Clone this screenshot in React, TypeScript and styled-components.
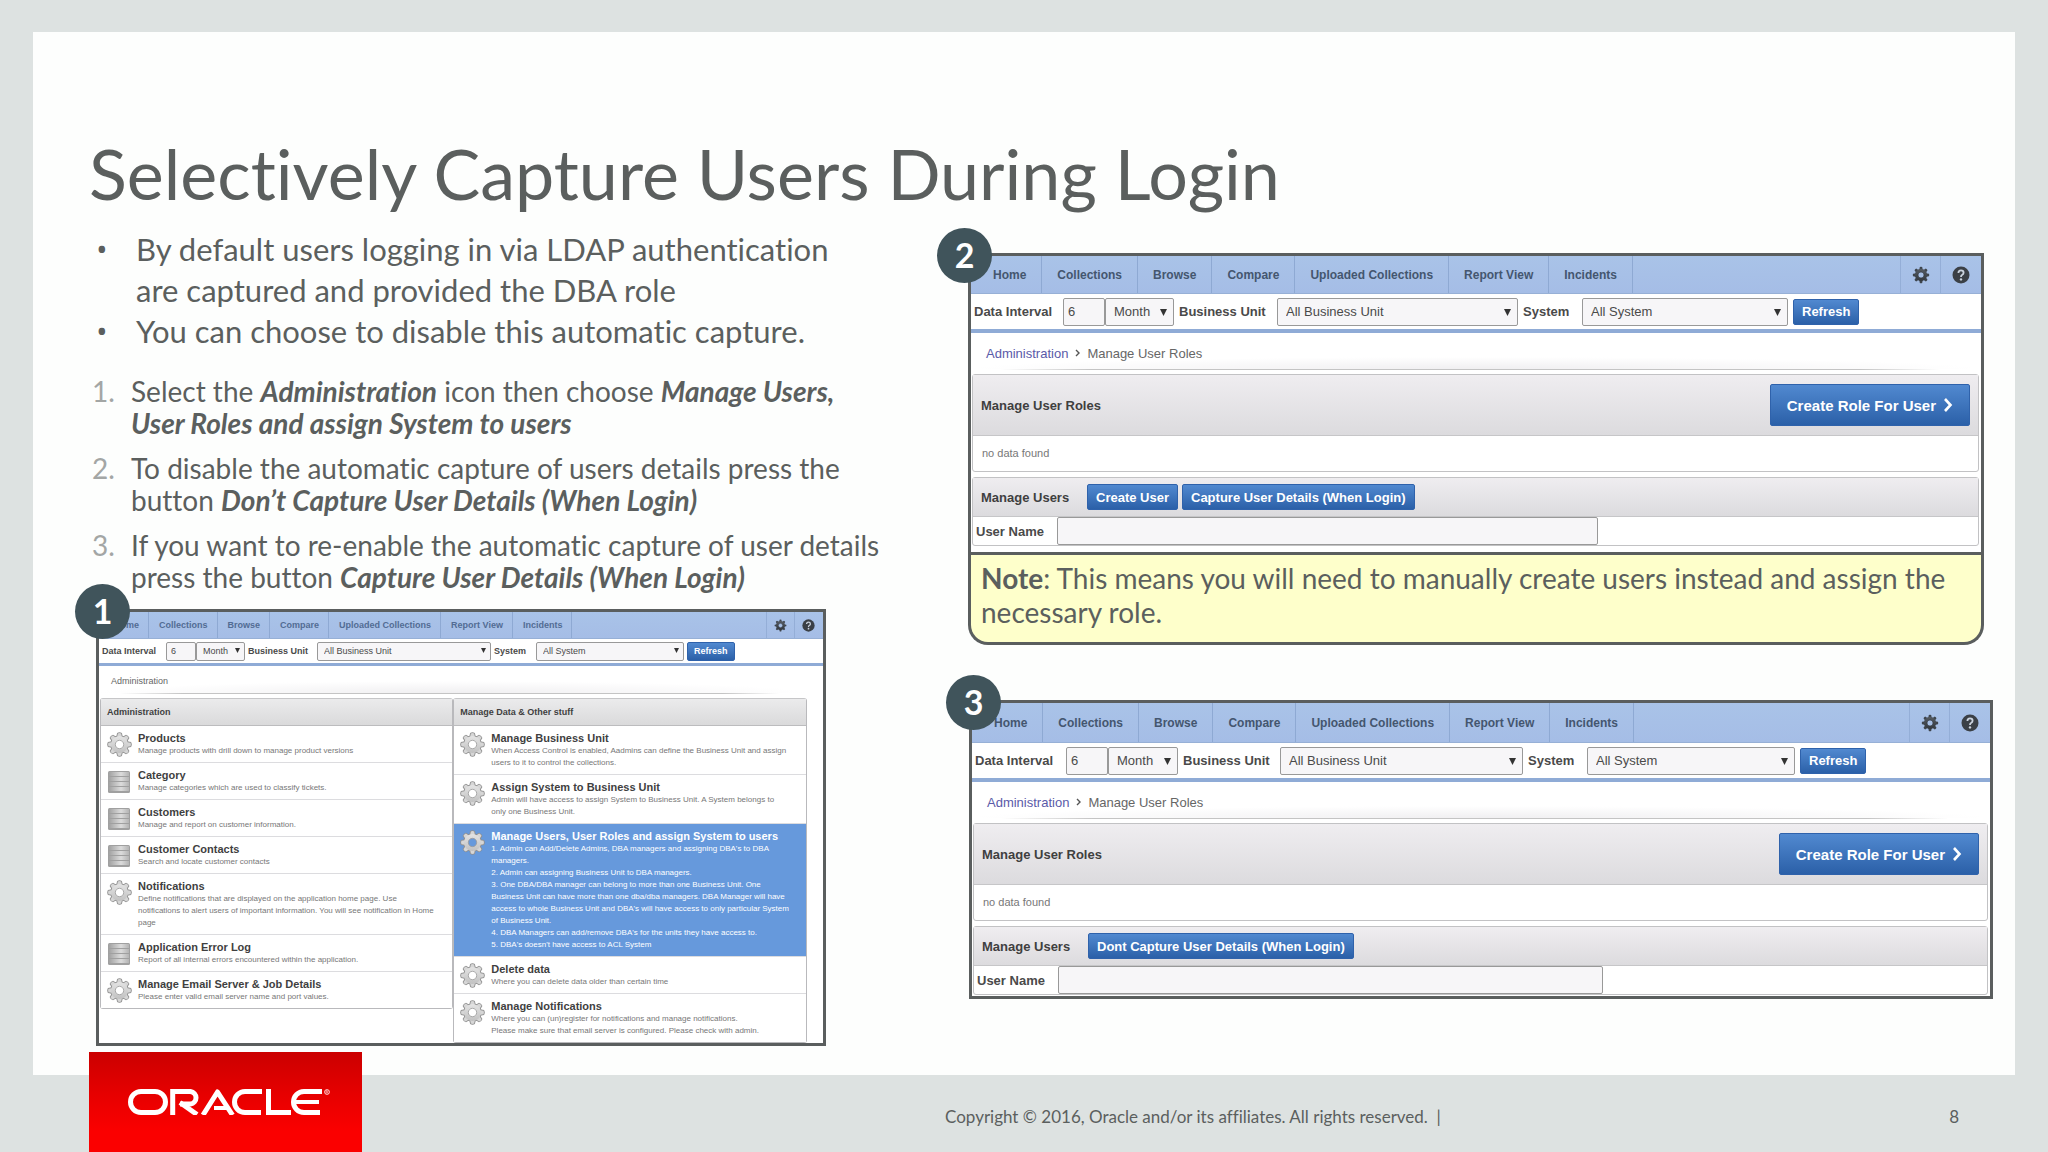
import React from "react";
import styled, { createGlobalStyle, css } from "styled-components";

const slideFont = `Lato, "Open Sans", sans-serif`;
const appFont = `"Liberation Sans", Arial, sans-serif`;

const ink = "#5b5f5e";
const frame = "#5a5e5e";

const Global = createGlobalStyle`
  *, *::before { box-sizing: border-box; }
  body { margin: 0; background: #dde2e1; }
`;

/* ---------- Slide ---------- */

const Page = styled.div`
  min-height: 100vh;
  display: flex;
  flex-direction: column;
  background: #dde2e1;
  color: ${ink};
  font-family: ${slideFont};
  font-variant-ligatures: none;
`;

const Slide = styled.main`
  flex: 1;
  margin: 32px 33px 0;
  padding: 99px 22px 28px 56px;
  background: #fdfefd;
`;

const Title = styled.h1`
  margin: 0 0 14px;
  font-size: 70px;
  line-height: 84px;
  font-weight: 400;
`;

const Columns = styled.div`
  display: grid;
  grid-template-columns: minmax(0, 879fr) minmax(0, 1025fr);
`;

const Column = styled.section`
  min-width: 0;
`;

const Bullets = styled.ul`
  margin: 0 0 23px;
  padding: 0;
  list-style: none;
  font-size: 31px;
  line-height: 41px;
`;

const Bullet = styled.li`
  display: flex;
  &::before {
    content: "•";
    flex: 0 0 47px;
    padding-left: 7px;
    font-family: "Open Sans", sans-serif;
  }
`;

const Steps = styled.ol`
  margin: 0 0 16px;
  padding: 0;
  display: flex;
  flex-direction: column;
  gap: 13px;
  list-style: none;
  counter-reset: step;
  font-size: 28px;
  line-height: 32px;
`;

const Step = styled.li`
  display: flex;
  counter-increment: step;
  &::before {
    content: counter(step) ".";
    flex: 0 0 42px;
    padding-left: 3px;
    color: #a3a6a5;
  }
  em { font-weight: 700; }
`;

const Footer = styled.footer`
  display: grid;
  grid-template-columns: minmax(0, 856fr) minmax(0, 1014fr);
  grid-template-rows: 77px;
  padding: 0 89px;
  align-items: end;
`;

const LogoBox = styled.div`
  width: 273px;
  height: 100px;
  padding-left: 6px;
  display: flex;
  align-items: center;
  justify-content: center;
  background: linear-gradient(#cb0000, #e80000 45%, #fb0000 80%);
`;

const FooterLine = styled.div`
  display: flex;
  justify-content: space-between;
  padding-bottom: 24px;
  font-size: 17px;
  line-height: 22px;
  white-space: pre;
`;

/* ---------- Framed application windows ---------- */

const Stack = styled.div<{ $width?: string; $top?: number; $right?: number; $left?: number }>`
  position: relative;
  width: ${(p) => p.$width ?? "auto"};
  margin: ${(p) => p.$top ?? 0}px ${(p) => p.$right ?? 0}px 0 ${(p) => p.$left ?? 0}px;
`;

const Badge = styled.span<{ $x: number }>`
  position: absolute;
  z-index: 1;
  top: -25px;
  left: ${(p) => p.$x}px;
  width: 55px;
  height: 55px;
  border-radius: 50%;
  background: #40545b;
  color: #fff;
  font-size: 34px;
  line-height: 54px;
  font-weight: 700;
  text-align: center;
`;

const Note = styled.p`
  margin: 0;
  padding: 6px 10px 13px;
  border: 3px solid ${frame};
  border-top: 0;
  border-radius: 0 0 20px 20px;
  background: #feffcb;
  font-size: 28px;
  line-height: 34px;
`;

const Window = styled.div<{ $compact?: boolean; $bottom?: number }>`
  border: 3px solid ${frame};
  padding-bottom: ${(p) => p.$bottom ?? 0}px;
  background: #fff;
  color: #444;
  font-family: ${appFont};
  font-size: ${(p) => (p.$compact ? 9 : 13)}px;
`;

const Nav = styled.nav<{ $compact?: boolean; $height: number }>`
  display: flex;
  height: ${(p) => p.$height}px;
  padding-left: ${(p) => (p.$compact ? 5 : 7)}px;
  border-bottom: 1px solid #97b0d6;
  background: linear-gradient(#a9c3e8, #a5bde6);
  font-size: ${(p) => (p.$compact ? 9 : 12)}px;
`;

const NavLink = styled.a<{ $compact?: boolean }>`
  display: flex;
  align-items: center;
  padding: ${(p) => (p.$compact ? "0 9px 0 10px" : "0 15px")};
  border-right: 1px solid #8ea9d3;
  color: ${(p) => (p.$compact ? "#526c94" : "#44566f")};
  font-weight: 700;
  text-decoration: none;
  white-space: nowrap;
`;

const NavIcons = styled.div`
  display: flex;
  margin-left: auto;
  padding-right: 1px;
`;

const IconButton = styled.button<{ $compact?: boolean }>`
  display: grid;
  place-items: center;
  width: ${(p) => (p.$compact ? 28 : 40)}px;
  padding: 0;
  border: 0;
  border-left: 1px solid #94aed7;
  background: none;
  svg {
    width: ${(p) => (p.$compact ? 13 : 18)}px;
    height: ${(p) => (p.$compact ? 13 : 18)}px;
  }
`;

const Toolbar = styled.form<{ $compact?: boolean }>`
  display: flex;
  align-items: center;
  height: ${(p) => (p.$compact ? 27 : 39)}px;
  padding-left: 3px;
  border-bottom: ${(p) => (p.$compact ? 3 : 4)}px solid #8fabd6;
`;

const FieldLabel = styled.label<{ $width: number }>`
  flex: 0 0 ${(p) => p.$width}px;
  color: #4a4a4a;
  font-weight: 700;
  white-space: nowrap;
`;

const control = css<{ $compact?: boolean }>`
  height: ${(p) => (p.$compact ? 19 : 28)}px;
  border: 1px solid #999;
  border-radius: 2px;
  background: #f7f6f8;
  color: #4a4a4a;
  font-family: inherit;
  font-size: inherit;
`;

const NumberBox = styled.input<{ $compact?: boolean }>`
  ${control}
  width: ${(p) => (p.$compact ? 30 : 42)}px;
  padding: 0 4px;
`;

const SelectBox = styled.span<{ $width: number; $gap: number }>`
  position: relative;
  flex: 0 0 ${(p) => p.$width}px;
  margin-right: ${(p) => p.$gap}px;
`;

const Select = styled.select<{ $compact?: boolean }>`
  ${control}
  display: block;
  width: 100%;
  padding: 0 ${(p) => (p.$compact ? 6 : 8)}px;
  appearance: none;
`;

const Arrow = styled.svg<{ $compact?: boolean }>`
  position: absolute;
  top: 50%;
  right: ${(p) => (p.$compact ? 5 : 7)}px;
  width: ${(p) => (p.$compact ? 5 : 7)}px;
  height: ${(p) => (p.$compact ? 5 : 7)}px;
  margin-top: -3px;
  fill: #333;
  pointer-events: none;
`;

const BlueButton = styled.button<{ $compact?: boolean; $large?: boolean }>`
  display: inline-flex;
  align-items: center;
  justify-content: center;
  gap: 7px;
  height: ${(p) => (p.$large ? 42 : p.$compact ? 19 : 26)}px;
  padding: 0 ${(p) => (p.$large ? 16 : p.$compact ? 6 : 8)}px;
  border: 1px solid #2f62ab;
  border-radius: 2px;
  background: linear-gradient(#5189d0, #2b60a8);
  color: #fff;
  font-family: inherit;
  font-size: ${(p) => (p.$large ? 15 : p.$compact ? 9 : 13)}px;
  font-weight: 700;
  white-space: nowrap;
`;

const Crumbs = styled.div<{ $compact?: boolean }>`
  display: flex;
  align-items: center;
  gap: 7px;
  height: ${(p) => (p.$compact ? 28 : 37)}px;
  margin: 0 ${(p) => (p.$compact ? 16 : 2)}px 4px 0;
  padding: ${(p) => (p.$compact ? "2px 0 0 12px" : "4px 0 0 15px")};
  color: #666;
  border-bottom: 1px solid;
  border-image: linear-gradient(90deg, transparent 3%, #c4c4c4 12%, #c4c4c4 88%, transparent 96%) 1;
  background: radial-gradient(ellipse 50% 12px at 50% 100%, #f0eff1, #fff);
  a { color: #5a5aa8; text-decoration: none; }
`;

const Region = styled.section`
  margin: 0 2px 5px 1px;
  border: 1px solid #c2c2c4;
  border-radius: 3px;
  &:last-child { margin-bottom: 1px; }
`;

const RegionHead = styled.header<{ $height: number }>`
  display: flex;
  align-items: center;
  gap: 4px;
  height: ${(p) => p.$height}px;
  padding: 0 8px;
  border-bottom: 1px solid #c6c6c8;
  background: linear-gradient(#efedf0, #dcdbde);
`;

const RegionTitle = styled.h2<{ $wide?: boolean }>`
  flex: ${(p) => (p.$wide ? "1" : "0 0 102px")};
  margin: 0;
  color: #3f3f3f;
  font-size: 13px;
  font-weight: 700;
`;

const Empty = styled.p`
  margin: 0;
  padding: 0 9px;
  font-size: 11px;
  line-height: 35px;
  color: #777;
`;

const UserRow = styled.div`
  display: flex;
  align-items: center;
  height: 28px;
  padding-left: 3px;
`;

const UserInput = styled.input`
  ${control}
  width: 54%;
`;

/* ---------- Administration lists ---------- */

const Lists = styled.div`
  display: grid;
  grid-template-columns: 1fr 1fr;
  align-items: start;
  margin: 0 16px 0 1px;
`;

const ListBox = styled.section`
  border: 1px solid #b9b9bc;
  border-top-color: #c6c6c8;
  border-radius: 3px;
`;

const ListTitle = styled.h2`
  margin: 0;
  padding: 0 6px;
  border-bottom: 1px solid #bcbcbe;
  background: linear-gradient(#ebebec, #dadadb);
  color: #3f3f3f;
  font-size: 9px;
  line-height: 26px;
  font-weight: 700;
`;

const Item = styled.article<{ $active?: boolean }>`
  display: flex;
  gap: 6px;
  padding: 6px 6px 5px;
  border-bottom: 1px solid #dcdcdf;
  background: ${(p) => (p.$active ? "#6699dc" : "#fff")};
  color: ${(p) => (p.$active ? "#fff" : "#777")};
  font-size: 8px;
  line-height: 12px;
  white-space: nowrap;
  &:last-child { border-bottom: 0; }
  svg { flex: 0 0 25px; height: 25px; }
  h3 {
    margin: 0;
    color: ${(p) => (p.$active ? "#fff" : "#3f3f3f")};
    font-size: 11px;
    line-height: 13px;
  }
`;

const Line = styled.span`
  display: block;
`;

/* ---------- Drawings ---------- */

const teeth = [0, 45, 90, 135, 180, 225, 270, 315];

function Gear({ dark, hole = "#fff" }: { dark?: boolean; hole?: string }) {
  const id = React.useId();
  return (
    <svg viewBox="0 0 24 24" aria-hidden="true">
      <defs>
        <linearGradient id={id} x1="0" y1="0" x2="0" y2="24" gradientUnits="userSpaceOnUse">
          <stop offset="0" stopColor={dark ? "#5d646c" : "#ececec"} />
          <stop offset="1" stopColor={dark ? "#2b3036" : "#b9b9b9"} />
        </linearGradient>
      </defs>
      {!dark && (
        <g fill="#8e8e8e">
          {teeth.map((a) => (
            <path key={a} d="M8.8 5 L9.7 .9 Q12 -.4 14.3 .9 L15.2 5 Z" transform={`rotate(${a} 12 12)`} />
          ))}
          <circle cx="12" cy="12" r="8.9" />
        </g>
      )}
      <g fill={dark ? "#3e454d" : "#d6d6d6"}>
        {teeth.map((a) => (
          <path key={a} d="M9.5 6 L10.4 1.4 Q12 .6 13.6 1.4 L14.5 6 Z" transform={`rotate(${a} 12 12)`} />
        ))}
      </g>
      <circle cx="12" cy="12" r="8.2" fill={`url(#${id})`} />
      <circle cx="12" cy="12" r="4" fill={hole} stroke={dark ? "#2b3036" : "#9c9c9c"} strokeWidth="0.8" />
    </svg>
  );
}

function Sheet() {
  const id = React.useId();
  return (
    <svg viewBox="0 0 25 25" aria-hidden="true">
      <defs>
        <linearGradient id={id} x1="0" y1="0" x2="1" y2="0">
          <stop offset="0" stopColor="#a2a2a2" />
          <stop offset="0.6" stopColor="#dcdcdc" />
          <stop offset="1" stopColor="#b4b4b4" />
        </linearGradient>
      </defs>
      <rect x="1" y="2" width="22" height="22" rx="1.5" fill="#a0a0a0" />
      <g fill={`url(#${id})`}>
        <rect x="2" y="3" width="20" height="4" />
        <rect x="2" y="8" width="20" height="4" />
        <rect x="2" y="13" width="20" height="4" />
        <rect x="2" y="18" width="20" height="4" />
      </g>
    </svg>
  );
}

function Help() {
  return (
    <svg viewBox="0 0 18 18" aria-hidden="true">
      <circle cx="9" cy="9" r="8.5" fill="#3b4046" />
      <path d="M6.4 7 Q6.4 4.4 9 4.4 Q11.6 4.4 11.6 6.8 Q11.6 8.2 10 9 Q9 9.5 9 11" fill="none" stroke="#cbd3de" strokeWidth="1.8" />
      <circle cx="9" cy="13.4" r="1.2" fill="#cbd3de" />
    </svg>
  );
}

function OracleLogo() {
  return (
    <svg width="202" height="26" viewBox="0 0 202 26" role="img" aria-label="Oracle">
      <g fill="none" stroke="#fff" strokeWidth="5">
        <rect x="2.5" y="2.5" width="35" height="21" rx="10.5" />
        <path d="M44.7 26V2.5H62.5A6.3 6.3 0 0 1 62.5 15H52" />
        <path d="M52 13.5L69 25.5" />
        <path d="M75 26L89.5 3L104.5 26" strokeLinejoin="round" />
        <path d="M86 19H100" strokeWidth="4" />
        <path d="M134 2.5H117A10.5 10.5 0 0 0 117 23.5H133" />
        <path d="M140.5 0V23.5H163" />
        <path d="M194 2.5H176A10.5 10.5 0 0 0 176 23.5H192" />
        <path d="M167 13H191" strokeWidth="4" />
      </g>
      <circle cx="199" cy="3" r="2.4" fill="none" stroke="#fff" strokeWidth="0.8" />
      <path d="M198.2 4.5V1.8H199.4Q200.2 2.5 199.2 3.1L200 4.5" fill="none" stroke="#fff" strokeWidth="0.6" />
    </svg>
  );
}

/* ---------- Shared window chrome ---------- */

const tabs = ["Home", "Collections", "Browse", "Compare", "Uploaded Collections", "Report View", "Incidents"];

const sizes = {
  small: { interval: 64, month: 49, unitLabel: 69, unit: 174, systemLabel: 42, system: 148, gap: 3 },
  medium: { interval: 89, month: 69, unitLabel: 98, unit: 241, systemLabel: 59, system: 206, gap: 5 },
  large: { interval: 91, month: 70, unitLabel: 97, unit: 243, systemLabel: 59, system: 208, gap: 5 },
};

type Size = keyof typeof sizes;

const navHeights: Record<Size, number> = { small: 27, medium: 38, large: 40 };

function Picker(props: { id: string; label?: string; value: string; width: number; gap: number; compact?: boolean }) {
  return (
    <SelectBox $width={props.width} $gap={props.gap}>
      <Select id={props.id} aria-label={props.label} $compact={props.compact}>
        <option>{props.value}</option>
      </Select>
      <Arrow $compact={props.compact} viewBox="0 0 8 8" aria-hidden="true">
        <path d="M0 0H8L4 8Z" />
      </Arrow>
    </SelectBox>
  );
}

function Chrome({ prefix, size }: { prefix: string; size: Size }) {
  const compact = size === "small";
  const m = sizes[size];
  return (
    <>
      <Nav $compact={compact} $height={navHeights[size]}>
        {tabs.map((t) => (
          <NavLink key={t} href="#" $compact={compact}>{t}</NavLink>
        ))}
        <NavIcons>
          <IconButton type="button" aria-label="Administration" $compact={compact}>
            <Gear dark hole="#a7c0e6" />
          </IconButton>
          <IconButton type="button" aria-label="Help" $compact={compact}>
            <Help />
          </IconButton>
        </NavIcons>
      </Nav>
      <Toolbar $compact={compact} onSubmit={(e) => e.preventDefault()}>
        <FieldLabel htmlFor={`${prefix}-interval`} $width={m.interval}>Data Interval</FieldLabel>
        <NumberBox id={`${prefix}-interval`} defaultValue="6" $compact={compact} />
        <Picker id={`${prefix}-period`} label="Period" value="Month" width={m.month} gap={m.gap} compact={compact} />
        <FieldLabel htmlFor={`${prefix}-unit`} $width={m.unitLabel}>Business Unit</FieldLabel>
        <Picker id={`${prefix}-unit`} value="All Business Unit" width={m.unit} gap={m.gap} compact={compact} />
        <FieldLabel htmlFor={`${prefix}-system`} $width={m.systemLabel}>System</FieldLabel>
        <Picker id={`${prefix}-system`} value="All System" width={m.system} gap={m.gap} compact={compact} />
        <BlueButton $compact={compact}>Refresh</BlueButton>
      </Toolbar>
    </>
  );
}

function RolesWindow(props: { prefix: string; size: Size; bottom?: number; actions: string[] }) {
  return (
    <Window $bottom={props.bottom}>
      <Chrome prefix={props.prefix} size={props.size} />
      <Crumbs>
        <a href="#">Administration</a>
        <svg width="5" height="8" viewBox="0 0 5 8" aria-hidden="true">
          <path d="M1 1L4 4L1 7" fill="none" stroke="#555" strokeWidth="1.4" />
        </svg>
        <span>Manage User Roles</span>
      </Crumbs>
      <Region>
        <RegionHead $height={61}>
          <RegionTitle $wide>Manage User Roles</RegionTitle>
          <BlueButton $large type="button">
            Create Role For User
            <svg width="10" height="14" viewBox="0 0 10 14" aria-hidden="true">
              <path d="M2 1L7.5 7L2 13" fill="none" stroke="#fff" strokeWidth="2.6" />
            </svg>
          </BlueButton>
        </RegionHead>
        <Empty>no data found</Empty>
      </Region>
      <Region>
        <RegionHead $height={39}>
          <RegionTitle>Manage Users</RegionTitle>
          {props.actions.map((a) => (
            <BlueButton key={a} type="button">{a}</BlueButton>
          ))}
        </RegionHead>
        <UserRow>
          <FieldLabel htmlFor={`${props.prefix}-user`} $width={81}>User Name</FieldLabel>
          <UserInput id={`${props.prefix}-user`} />
        </UserRow>
      </Region>
    </Window>
  );
}

type Entry = { icon: "gear" | "sheet"; title: string; lines: string[]; active?: boolean };

const adminEntries: Entry[] = [
  { icon: "gear", title: "Products", lines: ["Manage products with drill down to manage product versions"] },
  { icon: "sheet", title: "Category", lines: ["Manage categories which are used to classify tickets."] },
  { icon: "sheet", title: "Customers", lines: ["Manage and report on customer information."] },
  { icon: "sheet", title: "Customer Contacts", lines: ["Search and locate customer contacts"] },
  {
    icon: "gear",
    title: "Notifications",
    lines: [
      "Define notifications that are displayed on the application home page. Use",
      "notifications to alert users of important information. You will see notification in Home",
      "page",
    ],
  },
  { icon: "sheet", title: "Application Error Log", lines: ["Report of all internal errors encountered within the application."] },
  { icon: "gear", title: "Manage Email Server & Job Details", lines: ["Please enter valid email server name and port values."] },
];

const dataEntries: Entry[] = [
  {
    icon: "gear",
    title: "Manage Business Unit",
    lines: [
      "When Access Control is enabled, Aadmins can define the Business Unit and assign",
      "users to it to control the collections.",
    ],
  },
  {
    icon: "gear",
    title: "Assign System to Business Unit",
    lines: ["Admin will have access to assign System to Business Unit. A System belongs to", "only one Business Unit."],
  },
  {
    icon: "gear",
    title: "Manage Users, User Roles and assign System to users",
    active: true,
    lines: [
      "1. Admin can Add/Delete Admins, DBA managers and assigning DBA's to DBA",
      "managers.",
      "2. Admin can assigning Business Unit to DBA managers.",
      "3. One DBA/DBA manager can belong to more than one Business Unit. One",
      "Business Unit can have more than one dba/dba managers. DBA Manager will have",
      "access to whole Business Unit and DBA's will have access to only particular System",
      "of Business Unit.",
      "4. DBA Managers can add/remove DBA's for the units they have access to.",
      "5. DBA's doesn't have access to ACL System",
    ],
  },
  { icon: "gear", title: "Delete data", lines: ["Where you can delete data older than certain time"] },
  {
    icon: "gear",
    title: "Manage Notifications",
    lines: [
      "Where you can (un)register for notifications and manage notifications.",
      "Please make sure that email server is configured. Please check with admin.",
    ],
  },
];

function EntryList({ title, entries }: { title: string; entries: Entry[] }) {
  return (
    <ListBox>
      <ListTitle>{title}</ListTitle>
      {entries.map((e) => (
        <Item key={e.title} $active={e.active}>
          {e.icon === "gear" ? <Gear hole={e.active ? "#6699dc" : "#fff"} /> : <Sheet />}
          <div>
            <h3>{e.title}</h3>
            {e.lines.map((l) => (
              <Line key={l}>{l}</Line>
            ))}
          </div>
        </Item>
      ))}
    </ListBox>
  );
}

export default function App() {
  return (
    <Page>
      <Global />
      <Slide>
        <Title>Selectively Capture Users During Login</Title>
        <Columns>
          <Column>
            <Bullets>
              <Bullet>
                <span>By default users logging in via LDAP authentication<br />are captured and provided the DBA role</span>
              </Bullet>
              <Bullet>You can choose to disable this automatic capture.</Bullet>
            </Bullets>
            <Steps>
              <Step>
                <span>
                  Select the <em>Administration</em> icon then choose <em>Manage Users,<br />User Roles and assign System to users</em>
                </span>
              </Step>
              <Step>
                <span>
                  To disable the automatic capture of users details press the<br />button <em>Don’t Capture User Details (When Login)</em>
                </span>
              </Step>
              <Step>
                <span>
                  If you want to re-enable the automatic capture of user details<br />press the button <em>Capture User Details (When Login)</em>
                </span>
              </Step>
            </Steps>
            <Stack $width="83%" $left={7}>
              <Badge $x={-21}>1</Badge>
              <Window $compact>
                <Chrome prefix="admin" size="small" />
                <Crumbs $compact>Administration</Crumbs>
                <Lists>
                  <EntryList title="Administration" entries={adminEntries} />
                  <EntryList title="Manage Data & Other stuff" entries={dataEntries} />
                </Lists>
              </Window>
            </Stack>
          </Column>
          <Column>
            <Stack $top={24} $right={9}>
              <Badge $x={-31}>2</Badge>
              <RolesWindow
                prefix="disable"
                size="medium"
                bottom={5}
                actions={["Create User", "Capture User Details (When Login)"]}
              />
              <Note>
                <b>Note</b>: This means you will need to manually create users instead and assign the<br />necessary role.
              </Note>
            </Stack>
            <Stack $top={55} $left={1}>
              <Badge $x={-23}>3</Badge>
              <RolesWindow prefix="enable" size="large" actions={["Dont Capture User Details (When Login)"]} />
            </Stack>
          </Column>
        </Columns>
      </Slide>
      <Footer>
        <LogoBox>
          <OracleLogo />
        </LogoBox>
        <FooterLine>
          <span>Copyright © 2016, Oracle and/or its affiliates. All rights reserved.  |</span>
          <span>8</span>
        </FooterLine>
      </Footer>
    </Page>
  );
}
